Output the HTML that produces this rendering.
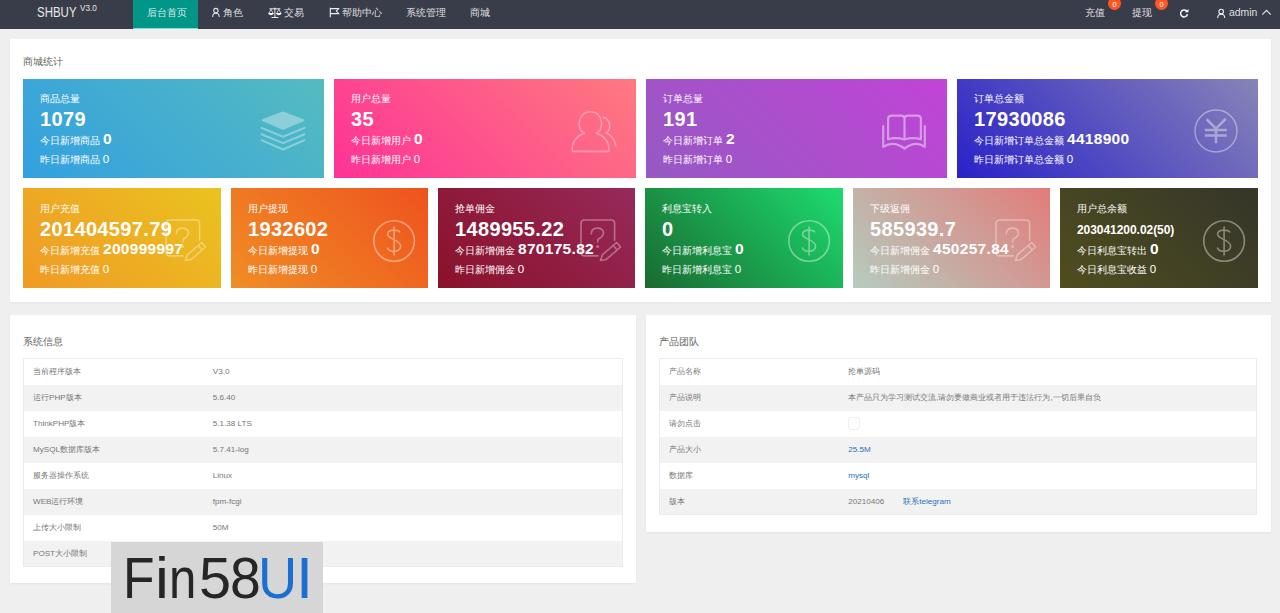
<!DOCTYPE html>
<html><head><meta charset="utf-8">
<style>
*{margin:0;padding:0;box-sizing:border-box}
html,body{width:1280px;height:613px;overflow:hidden;background:#efefef;font-family:"Liberation Sans",sans-serif}
.abs{position:absolute}
#hdr{position:absolute;left:0;top:0;width:1280px;height:29px;background:#393d49}
.nav{position:absolute;top:0;height:29px;line-height:26px;font-size:9.6px;color:rgba(255,255,255,.85);white-space:nowrap}
.badge{width:13px;height:13px;border-radius:50%;background:#ff5722;color:#fff;font-size:7.5px;line-height:15px;text-align:center}
.panel{position:absolute;background:#fff;box-shadow:0 1px 2px rgba(0,0,0,.05)}
.ptitle{position:absolute;font-size:10px;color:#666;line-height:12px;white-space:nowrap}
.card{position:absolute;color:#fff;overflow:hidden}
.card .t,.card .n,.card .d,.card .y{position:absolute;left:17px;white-space:nowrap}
.card .t{font-size:9.8px;line-height:12px}
.card .n{font-size:20px;font-weight:bold;line-height:22px;letter-spacing:.35px}
.card .n.sm{font-size:12px;letter-spacing:-.05px}
.card .d{font-size:9.8px;line-height:14px}
.card .d b{font-size:15.5px;font-weight:bold;margin-left:3px;letter-spacing:.3px}
.card .y{font-size:9.8px;line-height:12px}
.card .y i{font-style:normal;font-size:11.5px}
.card svg{position:absolute}
.tbox{position:absolute;border:1px solid #ebebeb;overflow:hidden}
.tr{position:absolute;left:0;right:0;height:26px;font-size:8.1px;color:#777;line-height:26px;white-space:nowrap}
.c1{position:absolute;left:9px}
.c2{position:absolute}
.wm{font-size:57px;line-height:70px;white-space:nowrap;transform-origin:0 0}
.chat{display:inline-block;width:12px;height:13px;border:1.5px solid #efefef;border-radius:3px;vertical-align:middle}
a{color:#2a6fc0;text-decoration:none}
</style></head><body>

<div id="hdr"></div>
<div class="abs" style="left:133px;top:0;width:65px;height:29px;background:#009688"></div>
<div class="abs" style="left:133px;top:28px;width:65px;height:1px;background:#8fd8d8"></div>
<div class="abs" style="left:36.5px;top:4px;font-size:14px;color:#e8e8e8;line-height:16px;transform:scaleX(.82);transform-origin:0 0">SHBUY</div>
<div class="abs" style="left:80px;top:4px;font-size:8.6px;color:#e8e8e8;line-height:9px;transform:scaleX(.95);transform-origin:0 0">V3.0</div>
<div class="nav" style="left:147px">后台首页</div>
<div class="nav" style="left:223px">角色</div>
<div class="nav" style="left:284px">交易</div>
<div class="nav" style="left:342px">帮助中心</div>
<div class="nav" style="left:406px">系统管理</div>
<div class="nav" style="left:470px">商城</div>
<div class="nav" style="left:1085px">充值</div>
<div class="nav" style="left:1132px">提现</div>
<div class="nav" style="left:1229px;font-size:10.4px;line-height:25px">admin</div>
<svg class="abs" style="left:210px;top:6px" width="12" height="13" viewBox="0 0 12 13"><g fill="none" stroke="rgba(255,255,255,.85)" stroke-width="1.1"><circle cx="5.9" cy="4.6" r="2.2"/><path d="M2.6,10.9 Q2.6,7.2 5.9,7.2 Q9.2,7.2 9.2,10.9"/></g></svg>
<svg class="abs" style="left:268px;top:7px" width="14" height="12" viewBox="0 0 14 12"><g fill="rgba(255,255,255,.9)" stroke="rgba(255,255,255,.9)" stroke-width="1"><path d="M1.5,1.8 H12.3 M6.9,0.6 V10.5 M3.5,10.5 H10.3" fill="none"/><path d="M3,2.2 L0.8,6.6 H5.2 Z M10.8,2.2 L8.6,6.6 H13 Z" fill="none" stroke-width=".8"/><path d="M0.6,6.6 Q3,9.2 5.4,6.6 Z M8.4,6.6 Q10.8,9.2 13.2,6.6 Z"/></g></svg>
<svg class="abs" style="left:329px;top:7px" width="11" height="11" viewBox="0 0 11 11"><g fill="none" stroke="rgba(255,255,255,.9)" stroke-width="1.1"><path d="M1.3,0.8 V10.2 M1.3,1.6 H9.6 L7.4,4.1 L9.6,6.6 H1.3"/></g></svg>
<svg class="abs" style="left:1178.5px;top:7.5px" width="11" height="11" viewBox="0 0 11 11"><g fill="none" stroke="rgba(255,255,255,.95)" stroke-width="1.5"><path d="M8.1,3.6 A3.5,3.5 0 1 0 8.5,6.3"/></g><path d="M5.9,4.3 L9.5,4.3 L9.5,0.9 Z" fill="rgba(255,255,255,.95)"/></svg>
<svg class="abs" style="left:1215px;top:6.5px" width="12" height="13" viewBox="0 0 12 13"><g fill="none" stroke="rgba(255,255,255,.9)" stroke-width="1.1"><circle cx="6.2" cy="4.6" r="2.3"/><path d="M2.7,11 Q2.7,7.2 6.2,7.2 Q9.7,7.2 9.7,11"/></g></svg>
<svg class="abs" style="left:1261px;top:8px" width="11" height="8" viewBox="0 0 11 8"><path d="M1.3,6.6 L5.5,2.3 L9.7,6.6" fill="none" stroke="rgba(255,255,255,.85)" stroke-width="1.2"/></svg>
<div class="abs badge" style="left:1108px;top:-3px">0</div>
<div class="abs badge" style="left:1155px;top:-3px">0</div>


<div class="panel" style="left:10px;top:39px;width:1261px;height:263px"></div>
<div class="ptitle" style="left:23px;top:55.5px">商城统计</div>
<div class="panel" style="left:10px;top:315px;width:626px;height:268px"></div>
<div class="ptitle" style="left:23px;top:335.5px">系统信息</div>
<div class="panel" style="left:646px;top:315px;width:625px;height:217px"></div>
<div class="ptitle" style="left:659px;top:335.5px">产品团队</div>

<div class="card" style="left:23px;top:79px;width:301px;height:99px;background:linear-gradient(45deg,#33a0e0,#55bbc0)"><svg style="left:235.5px;top:28px" width="48" height="48" viewBox="0 0 48 48"><g opacity=".35" stroke="#fff" fill="none" stroke-width="2.2" stroke-linejoin="round" stroke-linecap="round"><path d="M3.6,13.1 L23.9,5.4 L44.2,13.3 L23.9,21.8 Z" fill="#fff" stroke-width="2"/><path d="M2.5,20.9 L24,29.7 L45.5,20.9 M2.5,27.3 L24,36.1 L45.5,27.3 M2.5,33.2 L24,42.5 L45.5,33.2" stroke-width="2"/></g></svg><div class="t" style="top:14px">商品总量</div><div class="n" style="top:29px">1079</div><div class="d" style="top:53px">今日新增商品<b>0</b></div><div class="y" style="top:74px">昨日新增商品 <i>0</i></div></div>
<div class="card" style="left:334px;top:79px;width:302px;height:99px;background:linear-gradient(45deg,#fe3296,#ff7a80)"><svg style="left:235.8px;top:28.7px" width="48" height="48" viewBox="0 0 48 48"><g opacity=".35" stroke="#fff" fill="none" stroke-width="1.6" stroke-linejoin="round" stroke-linecap="round"><path d="M14.5,25.3 C6.5,23 7,3.8 20.4,3.8 C33.8,3.8 34.3,23 26.2,25.3 C33,27 38.8,33 38.8,40 L38.8,43.4 L2.3,43.4 L2.3,40 C2.3,33 8,27 14.5,25.3 Z"/><path d="M33.1,9.2 C41,11 41.5,22 36,24.8 C41,27 45,32 45.8,38"/></g></svg><div class="t" style="top:14px">用户总量</div><div class="n" style="top:29px">35</div><div class="d" style="top:53px">今日新增用户<b>0</b></div><div class="y" style="top:74px">昨日新增用户 <i>0</i></div></div>
<div class="card" style="left:646px;top:79px;width:301px;height:99px;background:linear-gradient(45deg,#9659c3,#c144d6)"><svg style="left:234px;top:28.8px" width="48" height="48" viewBox="0 0 48 48"><g opacity=".45" stroke="#fff" fill="none" stroke-width="2.2" stroke-linejoin="round" stroke-linecap="round"><path d="M24.5,31 L24.5,11 Q24.5,7.7 20.5,7.7 L12,7.7 Q8.1,7.7 8.1,11 L8.1,31.2 Q16,29 24.5,31.5 M24.5,31 L24.5,11 Q24.5,7.7 28.5,7.7 L37,7.7 Q40.9,7.7 40.9,11 L40.9,31.2 Q33,29 24.5,31.5 M3.2,18 L3.2,39 Q13,32 24.5,40.5 Q36,32 44.8,39 L44.8,18"/></g></svg><div class="t" style="top:14px">订单总量</div><div class="n" style="top:29px">191</div><div class="d" style="top:53px">今日新增订单<b>2</b></div><div class="y" style="top:74px">昨日新增订单 <i>0</i></div></div>
<div class="card" style="left:957px;top:79px;width:301px;height:99px;background:linear-gradient(45deg,#2a21c8,#8784b8)"><svg style="left:234.6px;top:28px" width="48" height="48" viewBox="0 0 48 48"><g opacity=".4" stroke="#fff" fill="none"><circle cx="24" cy="24" r="21" stroke-width="1.4"/><path d="M14.65,12.25 L24,21.55 L33.75,11.75 M12.75,23.05 H34.75 M12.75,28.45 H34.75 M24,21.55 V36.25" stroke-width="2.5"/></g></svg><div class="t" style="top:14px">订单总金额</div><div class="n" style="top:29px">17930086</div><div class="d" style="top:53px">今日新增订单总金额<b>4418900</b></div><div class="y" style="top:74px">昨日新增订单总金额 <i>0</i></div></div>
<div class="card" style="left:23px;top:188px;width:198px;height:100px;background:linear-gradient(45deg,#f09a26,#eac31f)"><svg style="left:142.3px;top:31.2px" width="48" height="48" viewBox="0 0 48 48"><g opacity=".35" stroke="#fff" fill="none" stroke-width="1.6" stroke-linejoin="round" stroke-linecap="round"><path d="M34.6,21.2 L34.6,4.5 Q34.6,1 31,1 L4.5,1 Q1,1 1,4.5 L1,33.4 Q1,36.9 4.5,36.9 L18,36.9"/><g transform="translate(20.5,41.5) rotate(-41)"><path d="M0,0 L5,-3 L24,-3 L24,3 L5,3 Z M19.5,-3 V3"/></g><path d="M11.3,14.9 Q11.5,9.1 17.1,9.1 Q23.4,9.1 23.4,14 Q23.4,17.5 18,20.3 L17.6,23"/><circle cx="17.6" cy="27.5" r="1.5" fill="#fff" stroke="none"/></g></svg><div class="t" style="top:15px">用户充值</div><div class="n" style="top:30px">201404597.79</div><div class="d" style="top:54px">今日新增充值<b>200999997</b></div><div class="y" style="top:75px">昨日新增充值 <i>0</i></div></div>
<div class="card" style="left:231px;top:188px;width:197px;height:100px;background:linear-gradient(45deg,#f08d25,#ee531e)"><svg style="left:140px;top:28px" width="48" height="48" viewBox="0 0 48 48"><g opacity=".4" stroke="#fff" fill="none" stroke-width="1.6"><circle cx="23.1" cy="25" r="20.3"/><path d="M28.9,16.5 C27.6,13.5 16.6,12.5 16.6,18.5 C16.6,23 29.6,24 29.6,30 C29.6,36.5 18.1,37 16.3,31.5 M23.1,10.6 V39.5"/></g></svg><div class="t" style="top:15px">用户提现</div><div class="n" style="top:30px">1932602</div><div class="d" style="top:54px">今日新增提现<b>0</b></div><div class="y" style="top:75px">昨日新增提现 <i>0</i></div></div>
<div class="card" style="left:438px;top:188px;width:197px;height:100px;background:linear-gradient(45deg,#8a1129,#962a5a)"><svg style="left:142.3px;top:31.2px" width="48" height="48" viewBox="0 0 48 48"><g opacity=".35" stroke="#fff" fill="none" stroke-width="1.6" stroke-linejoin="round" stroke-linecap="round"><path d="M34.6,21.2 L34.6,4.5 Q34.6,1 31,1 L4.5,1 Q1,1 1,4.5 L1,33.4 Q1,36.9 4.5,36.9 L18,36.9"/><g transform="translate(20.5,41.5) rotate(-41)"><path d="M0,0 L5,-3 L24,-3 L24,3 L5,3 Z M19.5,-3 V3"/></g><path d="M11.3,14.9 Q11.5,9.1 17.1,9.1 Q23.4,9.1 23.4,14 Q23.4,17.5 18,20.3 L17.6,23"/><circle cx="17.6" cy="27.5" r="1.5" fill="#fff" stroke="none"/></g></svg><div class="t" style="top:15px">抢单佣金</div><div class="n" style="top:30px">1489955.22</div><div class="d" style="top:54px">今日新增佣金<b>870175.82</b></div><div class="y" style="top:75px">昨日新增佣金 <i>0</i></div></div>
<div class="card" style="left:645px;top:188px;width:198px;height:100px;background:linear-gradient(45deg,#196a30,#1ddc6f)"><svg style="left:141px;top:28px" width="48" height="48" viewBox="0 0 48 48"><g opacity=".4" stroke="#fff" fill="none" stroke-width="1.6"><circle cx="23.1" cy="25" r="20.3"/><path d="M28.9,16.5 C27.6,13.5 16.6,12.5 16.6,18.5 C16.6,23 29.6,24 29.6,30 C29.6,36.5 18.1,37 16.3,31.5 M23.1,10.6 V39.5"/></g></svg><div class="t" style="top:15px">利息宝转入</div><div class="n" style="top:30px">0</div><div class="d" style="top:54px">今日新增利息宝<b>0</b></div><div class="y" style="top:75px">昨日新增利息宝 <i>0</i></div></div>
<div class="card" style="left:853px;top:188px;width:197px;height:100px;background:linear-gradient(45deg,#b5ccbe,#e27c7a)"><svg style="left:142.3px;top:31.2px" width="48" height="48" viewBox="0 0 48 48"><g opacity=".35" stroke="#fff" fill="none" stroke-width="1.6" stroke-linejoin="round" stroke-linecap="round"><path d="M34.6,21.2 L34.6,4.5 Q34.6,1 31,1 L4.5,1 Q1,1 1,4.5 L1,33.4 Q1,36.9 4.5,36.9 L18,36.9"/><g transform="translate(20.5,41.5) rotate(-41)"><path d="M0,0 L5,-3 L24,-3 L24,3 L5,3 Z M19.5,-3 V3"/></g><path d="M11.3,14.9 Q11.5,9.1 17.1,9.1 Q23.4,9.1 23.4,14 Q23.4,17.5 18,20.3 L17.6,23"/><circle cx="17.6" cy="27.5" r="1.5" fill="#fff" stroke="none"/></g></svg><div class="t" style="top:15px">下级返佣</div><div class="n" style="top:30px">585939.7</div><div class="d" style="top:54px">今日新增佣金<b>450257.84</b></div><div class="y" style="top:75px">昨日新增佣金 <i>0</i></div></div>
<div class="card" style="left:1060px;top:188px;width:198px;height:100px;background:linear-gradient(45deg,#4f4e1e,#35352a)"><svg style="left:141px;top:28px" width="48" height="48" viewBox="0 0 48 48"><g opacity=".4" stroke="#fff" fill="none" stroke-width="1.6"><circle cx="23.1" cy="25" r="20.3"/><path d="M28.9,16.5 C27.6,13.5 16.6,12.5 16.6,18.5 C16.6,23 29.6,24 29.6,30 C29.6,36.5 18.1,37 16.3,31.5 M23.1,10.6 V39.5"/></g></svg><div class="t" style="top:15px">用户总余额</div><div class="n sm" style="top:31px">203041200.02(50)</div><div class="d" style="top:54px">今日利息宝转出<b>0</b></div><div class="y" style="top:75px">今日利息宝收益 <i>0</i></div></div>
<div class="tbox" style="left:23px;top:358px;width:600px;height:209px"><div class="tr" style="top:0px;background:#fff"><span class="c1">当前程序版本</span><span class="c2" style="left:188.79999999999998px">V3.0</span></div><div class="tr" style="top:26px;background:#f2f2f2"><span class="c1">运行PHP版本</span><span class="c2" style="left:188.79999999999998px">5.6.40</span></div><div class="tr" style="top:52px;background:#fff"><span class="c1">ThinkPHP版本</span><span class="c2" style="left:188.79999999999998px">5.1.38 LTS</span></div><div class="tr" style="top:78px;background:#f2f2f2"><span class="c1">MySQL数据库版本</span><span class="c2" style="left:188.79999999999998px">5.7.41-log</span></div><div class="tr" style="top:104px;background:#fff"><span class="c1">服务器操作系统</span><span class="c2" style="left:188.79999999999998px">Linux</span></div><div class="tr" style="top:130px;background:#f2f2f2"><span class="c1">WEB运行环境</span><span class="c2" style="left:188.79999999999998px">fpm-fcgi</span></div><div class="tr" style="top:156px;background:#fff"><span class="c1">上传大小限制</span><span class="c2" style="left:188.79999999999998px">50M</span></div><div class="tr" style="top:182px;background:#f2f2f2"><span class="c1">POST大小限制</span><span class="c2" style="left:188.79999999999998px">8M</span></div></div>
<div class="tbox" style="left:659px;top:358px;width:598px;height:157px"><div class="tr" style="top:0px;background:#fff"><span class="c1">产品名称</span><span class="c2" style="left:188.2px">抢单源码</span></div><div class="tr" style="top:26px;background:#f2f2f2"><span class="c1">产品说明</span><span class="c2" style="left:188.2px">本产品只为学习测试交流,请勿要做商业或者用于违法行为,一切后果自负</span></div><div class="tr" style="top:52px;background:#fff"><span class="c1">请勿点击</span><span class="c2" style="left:188.2px"><span class="chat"></span></span></div><div class="tr" style="top:78px;background:#f2f2f2"><span class="c1">产品大小</span><span class="c2" style="left:188.2px"><a>25.5M</a></span></div><div class="tr" style="top:104px;background:#fff"><span class="c1">数据库</span><span class="c2" style="left:188.2px"><a>mysql</a></span></div><div class="tr" style="top:130px;background:#f2f2f2"><span class="c1">版本</span><span class="c2" style="left:188.2px">20210406<a style="margin-left:19px">联系telegram</a></span></div></div>
<div class="abs" style="left:111px;top:542px;width:212px;height:71px;background:#d6d6d6"></div><div class="abs wm" style="left:123.40px;top:543px;color:#262626;transform:scaleX(0.905)">F</div><div class="abs wm" style="left:154.51px;top:543px;color:#262626;transform:scaleX(1.096)">i</div><div class="abs wm" style="left:168.66px;top:543px;color:#262626;transform:scaleX(0.863)">n</div><div class="abs wm" style="left:199.07px;top:543px;color:#262626;transform:scaleX(1.011)">5</div><div class="abs wm" style="left:230.16px;top:543px;color:#262626;transform:scaleX(0.971)">8</div><div class="abs wm" style="left:257.70px;top:543px;color:#1a6fd0;transform:scaleX(0.952)">U</div><div class="abs wm" style="left:296.00px;top:543px;color:#1a6fd0;transform:scaleX(1.077)">I</div>
</body></html>
